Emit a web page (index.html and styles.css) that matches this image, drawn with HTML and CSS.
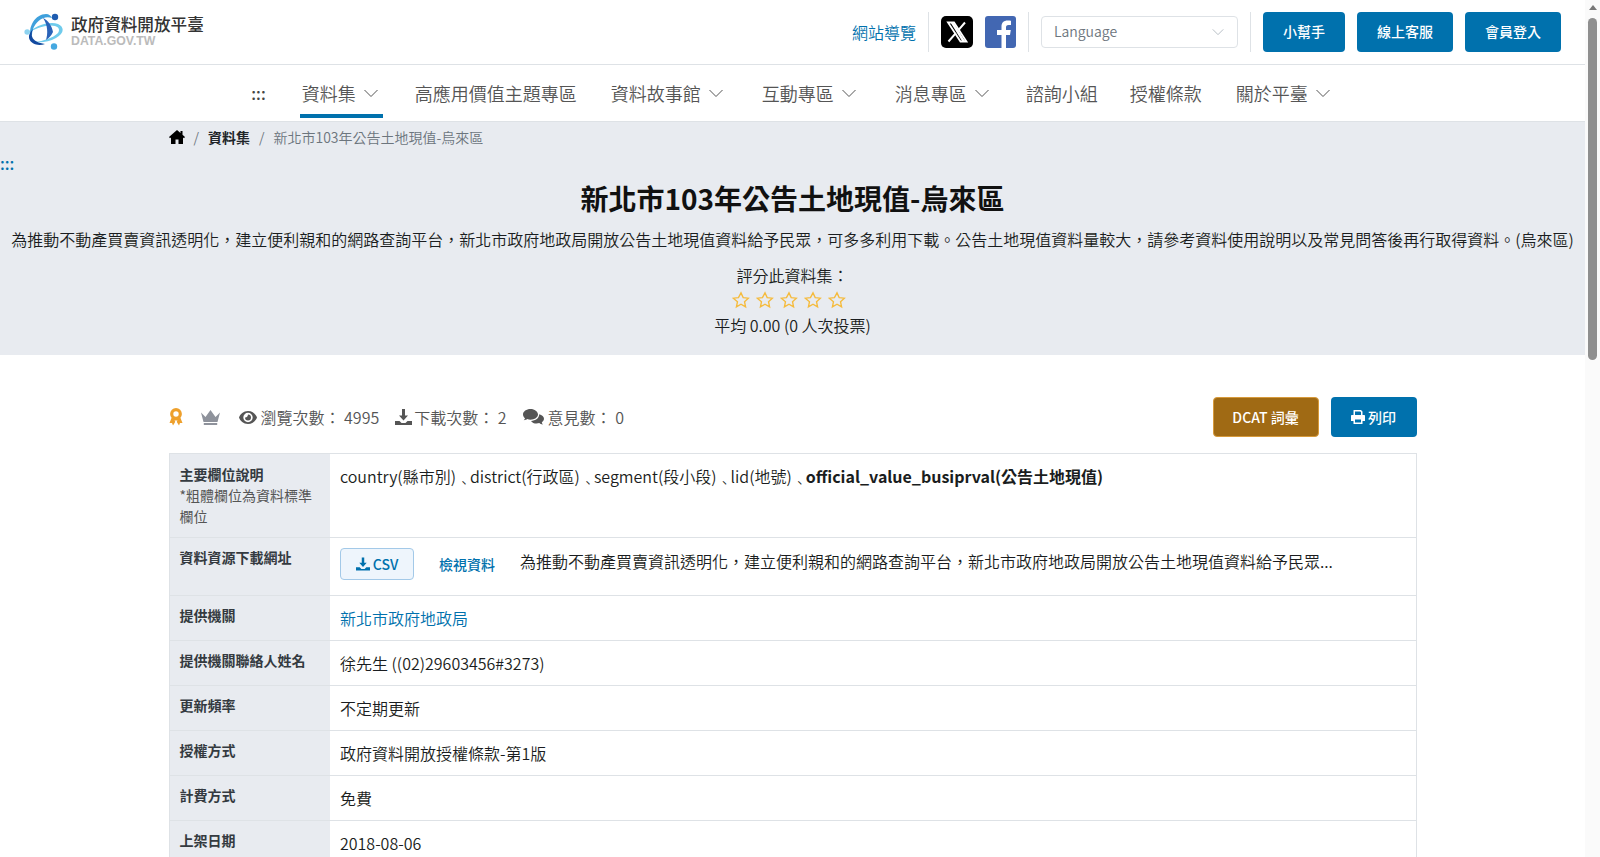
FILE: index.html
```html
<!DOCTYPE html>
<html lang="zh-TW">
<head>
    <meta charset="UTF-8">
    <meta name="viewport" content="width=device-width, initial-scale=1.0">
    <title>新北市103年公告土地現值-烏來區 | 政府資料開放平臺</title>
    <link rel="stylesheet" href="styles.css">
</head>
<body>
    <header class="top-bar">
        <a class="logo" href="#">
            <svg class="logo-mark" viewBox="0 0 40 37" width="40" height="37">
                <path d="M3 21C10 13 25 8 34 11C41 14 40 21 32 25C25 29 17 30 11 29C19 28 29 25 34 20C36 17 35 14 31 13C23 11 11 15 3 21Z" fill="#6fcbec"/>
                <path d="M28 5C20 2 12 8 9 16C8 19 8 21 8 23C5 20 6 14 9 9C12 4 17 1 22 1C25 1 27 3 28 5Z" fill="#3fa0dc"/>
                <path d="M9 16C6 23 8 29 21 31C15 33 7 32 5 25C4.500 22 6 19 9 16Z" fill="#12499f"/>
                <path d="M19 5C24 7 28 13 29 19C27 23 25 25 22 27C24 21 24 12 19 5Z" fill="#2a62b8"/>
                <circle cx="31" cy="4" r="3.200" fill="#1f5cb0"/>
                <circle cx="3.200" cy="19" r="2.800" fill="#8ed3f0"/>
                <circle cx="30" cy="33.500" r="3.200" fill="#45a8e0"/>
            </svg>
            <span class="logo-text">
                <span class="logo-name">政府資料開放平臺</span>
                <span class="logo-domain">DATA.GOV.TW</span>
            </span>
        </a>
        <div class="top-tools">
            <a class="site-map" href="#">網站導覽</a>
            <span class="tool-sep"></span>
            <a class="social" href="#" aria-label="X">
                <svg viewBox="0 0 32 32" width="32" height="32">
                    <rect width="32" height="32" rx="5" fill="#000"/>
                    <path d="M7 6.500H13L25.500 25.500H19.500Z" fill="none" stroke="#fff" stroke-width="1.800"/>
                    <path d="M9.500 6.500H12.500L24 25H21Z" fill="#fff"/>
                    <path d="M24 6.500L17.200 14.300M14.800 17.200L7.500 25.500" stroke="#fff" stroke-width="2" fill="none"/>
                </svg>
            </a>
            <a class="social" href="#" aria-label="Facebook">
                <svg viewBox="0 0 31 32" width="31" height="32">
                    <rect width="31" height="32" rx="3" fill="#4267b2"/>
                    <path d="M16.500 32V19H12V14H16.500V10.500C16.500 6.500 19 4.500 22.500 4.500C24 4.500 25.500 4.600 26 4.700V9H23.500C21.500 9 21 10 21 11.500V14H25.800L25 19H21V32Z" fill="#fff"/>
                </svg>
            </a>
            <span class="tool-sep"></span>
            <div class="lang-select">
                <span>Language</span>
                <svg viewBox="0 0 16 16" width="14" height="14"><path d="M2 5l6 6 6-6" fill="none" stroke="#adb5bd" stroke-width="1"/></svg>
            </div>
            <span class="tool-sep"></span>
            <a class="btn-main" href="#">小幫手</a>
            <a class="btn-main" href="#">線上客服</a>
            <a class="btn-main" href="#">會員登入</a>
        </div>
    </header>

    <nav class="main-nav">
        <a class="nav-dots" href="#">:::</a>
        <a class="nav-item has-sub active" href="#">資料集<svg class="chev" viewBox="0 0 16 16"><path d="M1.500 5l6.500 6.500L14.500 5"/></svg></a>
        <a class="nav-item" href="#">高應用價值主題專區</a>
        <a class="nav-item has-sub" href="#">資料故事館<svg class="chev" viewBox="0 0 16 16"><path d="M1.500 5l6.500 6.500L14.500 5"/></svg></a>
        <a class="nav-item has-sub" href="#">互動專區<svg class="chev" viewBox="0 0 16 16"><path d="M1.500 5l6.500 6.500L14.500 5"/></svg></a>
        <a class="nav-item has-sub" href="#">消息專區<svg class="chev" viewBox="0 0 16 16"><path d="M1.500 5l6.500 6.500L14.500 5"/></svg></a>
        <a class="nav-item" href="#">諮詢小組</a>
        <a class="nav-item" href="#">授權條款</a>
        <a class="nav-item has-sub" href="#">關於平臺<svg class="chev" viewBox="0 0 16 16"><path d="M1.500 5l6.500 6.500L14.500 5"/></svg></a>
    </nav>

    <section class="banner">
        <div class="container">
            <ol class="breadcrumb">
                <li><a href="#" aria-label="首頁">
                    <svg viewBox="0 0 16 14" width="16" height="14"><path d="M8 0L0 7l1 1.200L2 7.400V14H6.500V9.500H9.500V14H14V7.400L15 8.200 16 7 13.500 4.800V1H11.500V3L8 0Z" fill="#000"/></svg>
                </a></li>
                <li class="crumb-sep">/</li>
                <li class="crumb-strong">資料集</li>
                <li class="crumb-sep">/</li>
                <li class="crumb-now">新北市103年公告土地現值-烏來區</li>
            </ol>
        </div>
        <a class="side-dots" href="#">:::</a>
        <h1>新北市103年公告土地現值-烏來區</h1>
        <p class="intro">為推動不動產買賣資訊透明化，建立便利親和的網路查詢平台，新北市政府地政局開放公告土地現值資料給予民眾，可多多利用下載。公告土地現值資料量較大，請參考資料使用說明以及常見問答後再行取得資料。(烏來區)</p>
        <div class="rating">
            <div>評分此資料集：</div>
            <div class="stars">
                <svg viewBox="0 0 24 24"><path d="M12 2.500l2.900 6.300 6.900.8-5.100 4.700 1.400 6.800-6.100-3.400-6.100 3.400 1.400-6.800L1.700 9.600l6.900-.8z"/></svg>
                <svg viewBox="0 0 24 24"><path d="M12 2.500l2.900 6.300 6.900.8-5.100 4.700 1.400 6.800-6.100-3.400-6.100 3.400 1.400-6.800L1.700 9.600l6.900-.8z"/></svg>
                <svg viewBox="0 0 24 24"><path d="M12 2.500l2.900 6.300 6.900.8-5.100 4.700 1.400 6.800-6.100-3.400-6.100 3.400 1.400-6.800L1.700 9.600l6.900-.8z"/></svg>
                <svg viewBox="0 0 24 24"><path d="M12 2.500l2.900 6.300 6.900.8-5.100 4.700 1.400 6.800-6.100-3.400-6.100 3.400 1.400-6.800L1.700 9.600l6.900-.8z"/></svg>
                <svg viewBox="0 0 24 24"><path d="M12 2.500l2.900 6.300 6.900.8-5.100 4.700 1.400 6.800-6.100-3.400-6.100 3.400 1.400-6.800L1.700 9.600l6.900-.8z"/></svg>
            </div>
            <div>平均 0.00 (0 人次投票)</div>
        </div>
    </section>

    <main class="container content">
        <div class="stats-row">
            <div class="stats">
                <svg class="ic-ribbon" viewBox="0 0 14 18" width="14" height="18">
                    <circle cx="7" cy="6" r="4.300" fill="none" stroke="#eea02c" stroke-width="3.200"/>
                    <path d="M2.500 10L0.500 15H3L4 17.500L6.500 13.500H7.500L10 17.500L11 15H13.500L11.500 10Z" fill="#eea02c"/>
                    <path d="M5.500 12.500L7 15L8.500 12.500Z" fill="#fff"/>
                </svg>
                <svg class="ic-crown" viewBox="0 0 19 15" width="19" height="15">
                    <path d="M0 2.500L4.500 7L9.500 0L14.500 7L19 2.500L16.500 12H2.500Z M2.800 13H16.200V15H2.800Z" fill="#8e929b"/>
                </svg>
                <span class="stat">
                    <svg viewBox="0 0 18 13" width="18" height="13">
                        <path fill-rule="evenodd" d="M9 0C4.500 0 1.200 3.200 0 6.500C1.200 9.800 4.500 13 9 13S16.800 9.800 18 6.500C16.800 3.200 13.500 0 9 0ZM9 1.800A4.700 4.700 0 1 1 9 11.200A4.700 4.700 0 1 1 9 1.800Z" fill="#555"/>
                        <path fill-rule="evenodd" d="M9 3.500A3 3 0 1 1 6 6.500C7.500 6.800 8.800 5.500 9 3.500Z" fill="#555"/>
                    </svg>
                    <span>瀏覽次數： 4995</span>
                </span>
                <span class="stat stat-tight">
                    <svg viewBox="0 0 17 16" width="17" height="16">
                        <path d="M7 0H10V6.500H13L8.500 11.500L4 6.500H7ZM0 12H4.500L6.500 14H10.500L12.500 12H17V16H0Z" fill="#555"/>
                    </svg>
                    <span>下載次數： 2</span>
                </span>
                <span class="stat">
                    <svg viewBox="0 0 21 16" width="21" height="16">
                        <path d="M7.500 0C3.400 0 0 2.400 0 5.500C0 7 .8 8.300 2 9.300C1.700 10.200 1 11 .8 11.200C2.300 11.200 3.500 10.600 4.300 10.100C5.300 10.500 6.400 10.700 7.500 10.700C11.600 10.700 15 8.300 15 5.500S11.600 0 7.500 0Z" fill="#555"/>
                        <path d="M16.200 5.200C16.300 9 12.600 11.700 8 11.900C9 13.600 11.200 14.500 13.500 14.500C14.500 14.500 15.500 14.300 16.300 14C17 14.500 18.300 15.500 20 15.500C19.700 15.200 19.100 14.300 18.800 13.400C20 12.500 21 11.200 21 9.800C21 7.700 19 5.900 16.200 5.200Z" fill="#555"/>
                    </svg>
                    <span>意見數： 0</span>
                </span>
            </div>
            <div class="stats-actions">
                <a class="btn-dcat" href="#">DCAT 詞彙</a>
                <a class="btn-print" href="#">
                    <svg viewBox="0 0 14 14" width="14" height="14">
                        <path fill-rule="evenodd" d="M3 0H10L11.500 1.500V5H13C13.600 5 14 5.400 14 6V11H11.500V14H2.500V11H0V6C0 5.400.4 5 1 5H2.500V1C2.500.4 2.500 0 3 0ZM4 1.500V5H10V2.200L9.300 1.500ZM4 9.500V12.500H10V9.500Z" fill="#fff"/>
                    </svg>
                    列印
                </a>
            </div>
        </div>

        <table class="info-table">
            <tr>
                <th>主要欄位說明<small>*粗體欄位為資料標準欄位</small></th>
                <td>country(縣市別)<span class="dun">﹑</span>district(行政區)<span class="dun">﹑</span>segment(段小段)<span class="dun">﹑</span>lid(地號)<span class="dun">﹑</span><b>official_value_busiprval(公告土地現值)</b></td>
            </tr>
            <tr>
                <th>資料資源下載網址</th>
                <td>
                    <div class="download-row">
                        <a class="btn-csv" href="#">
                            <svg viewBox="0 0 17 16" width="14" height="14">
                                <path d="M7 0H10V6.500H13L8.500 11.500L4 6.500H7ZM0 12H4.500L6.500 14H10.500L12.500 12H17V16H0Z" fill="#0071ad"/>
                            </svg>
                            CSV
                        </a>
                        <a class="view-link" href="#">檢視資料</a>
                        <span class="file-desc">為推動不動產買賣資訊透明化，建立便利親和的網路查詢平台，新北市政府地政局開放公告土地現值資料給予民眾...</span>
                    </div>
                </td>
            </tr>
            <tr><th>提供機關</th><td><a href="#">新北市政府地政局</a></td></tr>
            <tr><th>提供機關聯絡人姓名</th><td>徐先生 ((02)29603456#3273)</td></tr>
            <tr><th>更新頻率</th><td>不定期更新</td></tr>
            <tr><th>授權方式</th><td>政府資料開放授權條款-第1版</td></tr>
            <tr><th>計費方式</th><td>免費</td></tr>
            <tr><th>上架日期</th><td>2018-08-06</td></tr>
        </table>
    </main>

    <div class="scrollbar">
        <span class="scroll-arrow"></span>
        <span class="scroll-thumb"></span>
    </div>
</body>
</html>
```

FILE: styles.css
```css
* {
    margin: 0;
    padding: 0;
    box-sizing: border-box;
}

body {
    padding-right: 15px;
    font-family: "Noto Sans CJK TC", "Noto Sans", sans-serif;
    font-size: 16px;
    font-weight: 350;
    line-height: 1.5;
    color: #1a1d20;
    background-color: #fff;
}

a {
    color: #0071ad;
    text-decoration: none;
}

.container {
    width: 1272px;
    margin: 0 auto;
    padding: 0 12px;
}

/* window scrollbar */
.scrollbar {
    position: fixed;
    top: 0;
    right: 0;
    bottom: 0;
    display: flex;
    flex-direction: column;
    align-items: center;
    width: 15px;
    background-color: #fafafa;
}

.scroll-arrow {
    width: 0;
    height: 0;
    margin-top: 5px;
    border-left: 4.500px solid transparent;
    border-right: 4.500px solid transparent;
    border-bottom: 5px solid #777;
}

.scroll-thumb {
    width: 9px;
    height: 342px;
    margin-top: 8px;
    background-color: #8f8f8f;
    border-radius: 5px;
}

/* top bar */
.top-bar {
    display: flex;
    justify-content: space-between;
    align-items: center;
    height: 65px;
    padding: 0 24px 1px 24px;
    border-bottom: 1px solid #dee2e6;
}

.logo {
    display: flex;
    align-items: center;
    gap: 7px;
}

.logo-text {
    display: flex;
    flex-direction: column;
}

.logo-name {
    font-size: 16.600px;
    line-height: 19px;
    font-weight: 500;
    color: #333;
}

.logo-domain {
    font-family: "Liberation Sans", sans-serif;
    font-size: 12.300px;
    line-height: 14px;
    font-weight: 700;
    color: #bbb;
}

.top-tools {
    display: flex;
    align-items: center;
}

.site-map {
    margin-right: 12px;
}

.tool-sep {
    width: 1px;
    height: 40px;
    background-color: #dee2e6;
}

.social {
    display: flex;
    margin-left: 12px;
}

.social + .tool-sep {
    margin-left: 12px;
}

.lang-select {
    display: flex;
    justify-content: space-between;
    align-items: center;
    width: 197px;
    height: 32px;
    margin: 0 12px;
    padding: 0 12px;
    font-size: 14px;
    color: #6c757d;
    border: 1px solid #dee2e6;
    border-radius: 4px;
}

.btn-main {
    display: flex;
    align-items: center;
    height: 40px;
    margin-left: 12px;
    padding: 0 20px;
    font-size: 14px;
    font-weight: 500;
    color: #fff;
    background-color: #0071ad;
    border-radius: 4px;
}

/* main navigation */
.main-nav {
    display: flex;
    justify-content: center;
    align-items: stretch;
    height: 57px;
    padding-left: 17px;
    border-bottom: 1px solid #dee2e6;
}

.nav-dots {
    align-self: center;
    margin-right: 18px;
    font-size: 16px;
    font-weight: 500;
    color: #444;
}

.nav-item {
    display: flex;
    align-items: center;
    margin: 0 16px;
    font-size: 18px;
    color: #555;
    position: relative;
}

.nav-item.has-sub {
    padding: 0 4px 0 2px;
}

.nav-item.active::after {
    content: "";
    position: absolute;
    left: 0;
    right: 0;
    bottom: 3px;
    height: 4px;
    background-color: #0071ad;
}

.chev {
    width: 16px;
    height: 16px;
    margin-left: 7px;
    fill: none;
    stroke: #555;
    stroke-width: 1;
}

/* banner */
.banner {
    height: 233px;
    background-color: #e8ebf0;
    text-align: center;
}

.breadcrumb {
    display: flex;
    align-items: center;
    gap: 8px;
    padding-top: 3px;
    height: 27px;
    list-style: none;
    font-size: 14px;
    color: #6c757d;
}

.breadcrumb a {
    display: flex;
}

.crumb-sep {
    padding: 0 1px;
    color: #6c757d;
}

.crumb-strong {
    font-weight: 700;
    color: #212529;
}

.side-dots {
    display: block;
    height: 21px;
    margin-top: 4px;
    font-size: 16px;
    font-weight: 500;
    line-height: 21px;
    text-align: left;
}

.banner h1 {
    margin-top: 8px;
    font-size: 28px;
    line-height: 32px;
    font-weight: 700;
    color: #111;
}

.intro {
    margin-top: 13px;
    white-space: nowrap;
}

.rating {
    margin-top: 12px;
}

.stars {
    display: flex;
    justify-content: center;
    align-items: center;
    gap: 6px;
    height: 26px;
    padding-right: 7px;
}

.stars svg {
    width: 18px;
    height: 18px;
    fill: none;
    stroke: #f5bb3d;
    stroke-width: 1.800;
}

/* stats */
.content {
    padding-top: 42px;
    padding-bottom: 60px;
}

.stats-row {
    display: flex;
    justify-content: space-between;
    align-items: center;
    height: 40px;
    margin-bottom: 16px;
}

.stats {
    display: flex;
    align-items: center;
    color: #555;
}

.ic-ribbon {
    margin-right: 18px;
}

.ic-crown {
    margin-right: 19px;
}

.stat {
    display: flex;
    align-items: center;
    gap: 4px;
    margin-right: 16px;
}

.stat-tight {
    gap: 2px;
}

.stats-actions {
    display: flex;
    gap: 12px;
}

.btn-dcat,
.btn-print {
    display: flex;
    align-items: center;
    justify-content: center;
    height: 40px;
    font-size: 14px;
    font-weight: 500;
    color: #fff;
    border-radius: 4px;
}

.btn-dcat {
    width: 106px;
    background-color: #a06a14;
    border: 1px solid #d79a3b;
}

.btn-print {
    gap: 3px;
    width: 86px;
    background-color: #0071ad;
}

/* info table */
.info-table {
    width: 1248px;
    border-collapse: collapse;
    border: 1px solid #dee2e6;
}

.info-table th,
.info-table td {
    padding: 10px;
    text-align: left;
    vertical-align: top;
    border-bottom: 1px solid #dee2e6;
}

.info-table th {
    width: 161px;
    font-size: 14px;
    line-height: 21px;
    font-weight: 700;
    color: #343a40;
    background-color: #e8ebf0;
}

.info-table tr + tr th {
    padding-top: 9px;
}

.info-table th small {
    display: block;
    font-size: 14px;
    font-weight: 400;
    color: #555;
}

.dun {
    margin-right: -2px;
}

.download-row {
    display: flex;
    align-items: flex-start;
    height: 37px;
    white-space: nowrap;
}

.btn-csv {
    display: flex;
    align-items: center;
    justify-content: center;
    gap: 3px;
    width: 74px;
    height: 32px;
    font-size: 14px;
    font-weight: 500;
    background-color: #eef5fc;
    border: 1px solid #a3c9e8;
    border-radius: 4px;
}

.view-link {
    margin: 6px 0 0 25px;
    font-size: 14px;
    line-height: 21px;
    font-weight: 500;
}

.file-desc {
    margin: 1px 0 0 25px;
}
```
